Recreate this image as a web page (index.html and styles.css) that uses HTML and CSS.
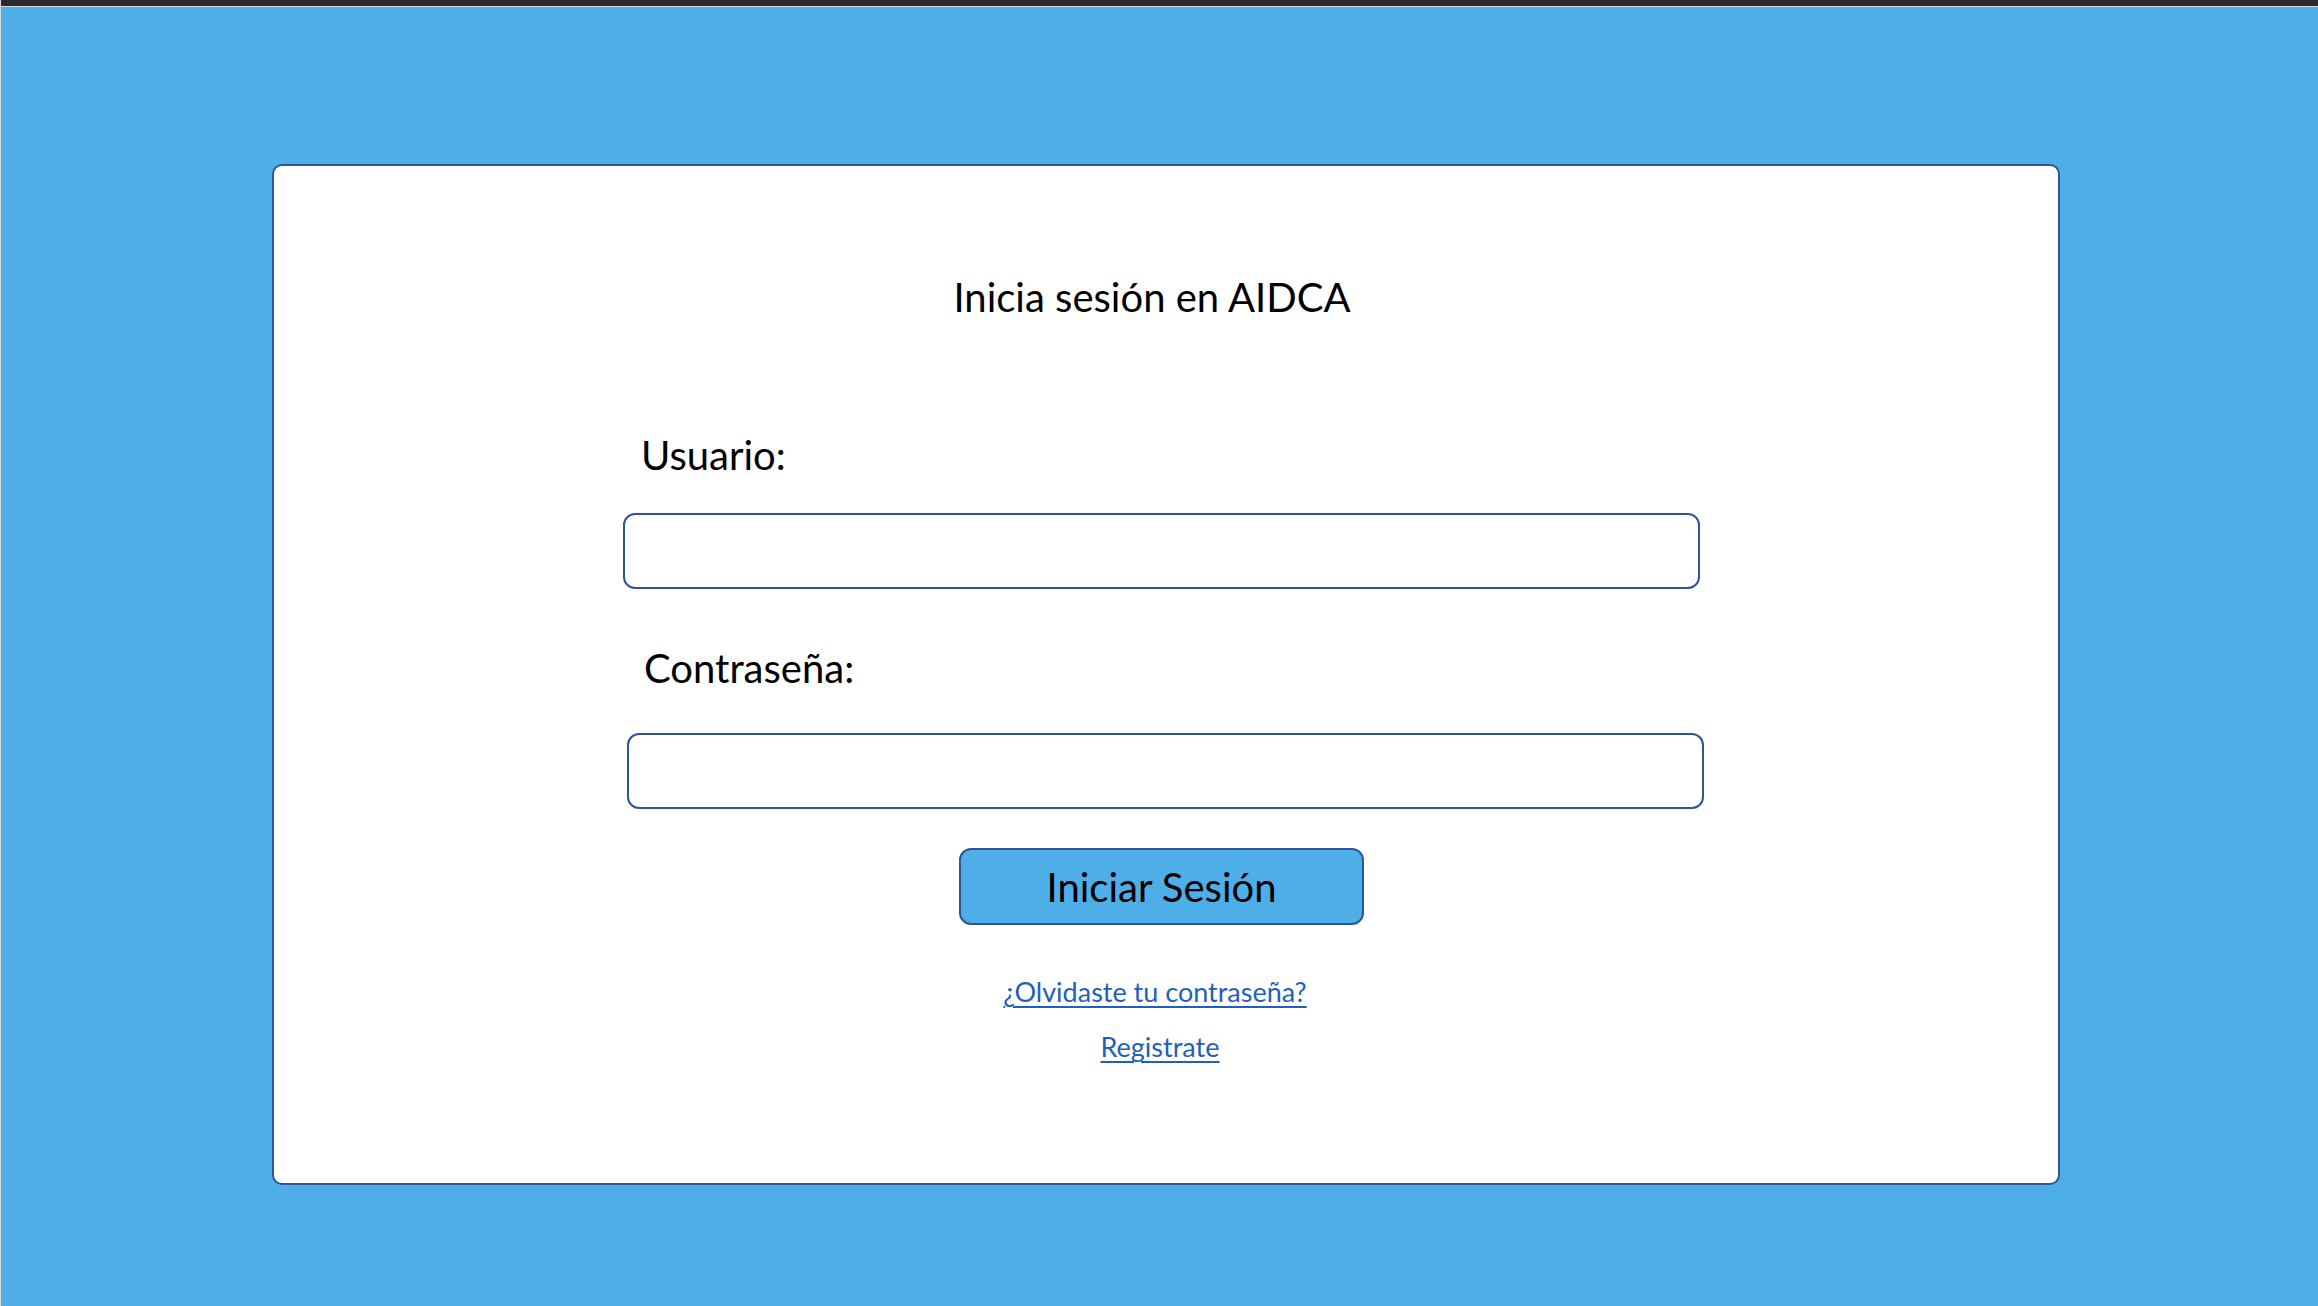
FILE: index.html
```html
<!DOCTYPE html>
<html lang="es">
<head>
<meta charset="utf-8">
<title>Inicia sesión en AIDCA</title>
<link rel="stylesheet" href="styles.css">
</head>
<body>
<div class="topbar"></div>
<main class="stage">
  <section class="card">
    <h1 class="title">Inicia sesión en AIDCA</h1>
    <label class="label label-user" for="usuario">Usuario:</label>
    <input class="field field-user" id="usuario" type="text">
    <label class="label label-pass" for="pass">Contraseña:</label>
    <input class="field field-pass" id="pass" type="password">
    <button class="btn" type="button">Iniciar Sesión</button>
    <a class="link link-forgot" href="#">¿Olvidaste tu contraseña?</a>
    <a class="link link-register" href="#">Registrate</a>
  </section>
</main>
</body>
</html>
```
FILE: styles.css
```css
html, body {
  margin: 0;
  padding: 0;
}
body {
  background: #4daee8;
  font-family: "Lato", "Liberation Sans", sans-serif;
  color: #000;
  width: 2318px;
  height: 1306px;
  overflow: hidden;
  border-left: 1px solid #d9d9d9;
  box-sizing: border-box;
}
.topbar {
  height: 6px;
  background: #2b2b2b;
  border-bottom: 1px solid #d9d9d9;
}
.stage {
  padding-top: 157px;
  padding-left: 271px;
}
.card {
  box-sizing: border-box;
  width: 1788px;
  height: 1021px;
  background: #fff;
  border: 2px solid #2f5597;
  border-radius: 10px;
  display: flex;
  flex-direction: column;
  align-items: flex-start;
}
.title {
  margin: 107px 0 0 0;
  align-self: stretch;
  text-align: center;
  padding-right: 28px;
  font-size: 40px;
  font-weight: 400;
  line-height: 1.2;
}
.label {
  font-size: 40px;
  line-height: 1.2;
  display: block;
}
.label-user {
  margin: 110px 0 0 367px;
}
.field {
  box-sizing: border-box;
  width: 1077px;
  height: 76px;
  border: 2px solid #2f5597;
  border-radius: 12px;
  background: #fff;
  outline: none;
  padding: 0 16px;
  font: inherit;
  font-size: 28px;
}
.field-user {
  margin: 34px 0 0 349px;
}
.label-pass {
  margin: 55px 0 0 370px;
}
.field-pass {
  margin: 41px 0 0 353px;
}
.btn {
  box-sizing: border-box;
  margin: 39px 0 0 685px;
  width: 405px;
  height: 77px;
  background: #4daee8;
  border: 2px solid #2f5597;
  border-radius: 12px;
  font-family: inherit;
  font-size: 40px;
  color: #000;
  padding: 0;
  line-height: 1;
}
.link {
  align-self: stretch;
  text-align: center;
  font-size: 27px;
  line-height: 1.2;
  color: #1f5fc0;
  text-decoration: underline;
  text-decoration-thickness: 2px;
  text-underline-offset: 4px;
}
.link-forgot {
  margin-top: 51px;
  padding-right: 22px;
}
.link-register {
  margin-top: 23px;
  padding-right: 12px;
}
```
